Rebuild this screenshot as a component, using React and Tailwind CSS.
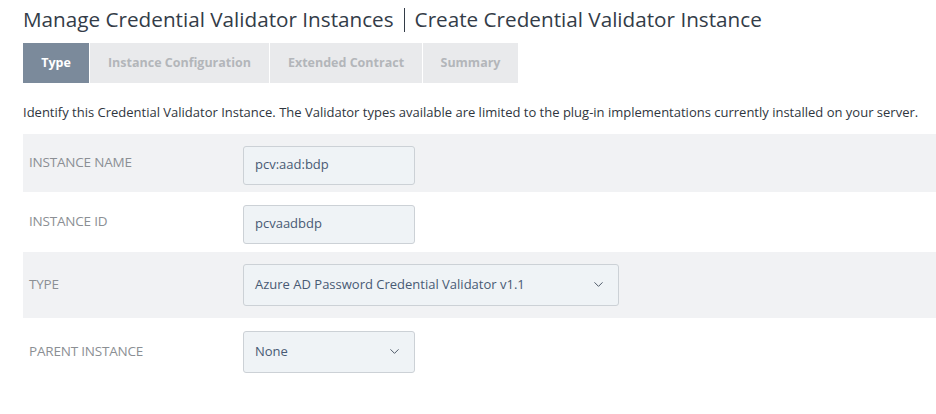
import { ChevronDown } from "lucide-react";

const tabs = [
  { name: "Type", w: "w-[66px]" },
  { name: "Instance Configuration", w: "w-[179px]" },
  { name: "Extended Contract", w: "w-[152px]" },
  { name: "Summary", w: "w-[95px]" },
];

const Field = ({ label, shaded, height, children }) => (
  <div className={`flex items-center ${height} ${shaded ? "bg-[#f1f2f4]" : "bg-white"}`}>
    <div className="w-[220px] pl-[6px] text-[13.5px] uppercase text-[#8b8f94] tracking-[-0.2px]">{label}</div>
    {children}
  </div>
);

const TextBox = ({ value }) => (
  <div className="w-[172px] h-[39px] mt-[5px] flex items-center px-[11px] rounded-[3px] border border-[#ccd1d6] bg-[#eff3f6] text-[13px] text-[#485a74]">
    {value}
  </div>
);

const SelectBox = ({ value, width }) => (
  <div className={`${width} h-[42px] flex items-center justify-between pl-[11px] pr-[12px] rounded-[3px] border border-[#ccd1d6] bg-[#eff3f6] text-[13px] text-[#485a74]`}>
    <span>{value}</span>
    <ChevronDown size={15} strokeWidth={1.6} className="text-[#4f5a69]" />
  </div>
);

export default function App() {
  return (
    <div className="w-[936px] h-[414px] bg-white pl-[23px] font-['Open_Sans',sans-serif] text-[#2f3640] overflow-hidden">
      {/* Header */}
      <div className="flex items-center h-[38px] pt-[2px] text-[20.7px] text-[#333c48]">
        <span>Manage Credential Validator Instances</span>
        <span className="mx-[10px] h-[24px] w-px bg-[#333c48]" />
        <span>Create Credential Validator Instance</span>
      </div>

      {/* Tabs */}
      <div className="flex mt-[5px] gap-px">
        {tabs.map((t, i) => (
          <div
            key={t.name}
            className={`${t.w} h-[40px] flex items-center justify-center text-[12.5px] font-bold whitespace-nowrap ${
              i === 0 ? "bg-[#7b8a9b] text-white" : "bg-[#e9eaec] text-[#b3b6ba]"
            }`}
          >
            {t.name}
          </div>
        ))}
      </div>

      <p className="mt-[20px] text-[13px] text-[#2f3640] whitespace-nowrap">
        Identify this Credential Validator Instance. The Validator types available are limited to the plug-in implementations currently installed on your server.
      </p>

      {/* Form */}
      <div className="mt-[11px]">
        <Field label="Instance Name" shaded height="h-[58px]">
          <TextBox value="pcv:aad:bdp" />
        </Field>
        <Field label="Instance ID" height="h-[60px]">
          <TextBox value="pcvaadbdp" />
        </Field>
        <Field label="Type" shaded height="h-[66px]">
          <SelectBox value="Azure AD Password Credential Validator v1.1" width="w-[376px]" />
        </Field>
        <Field label="Parent Instance" height="h-[68px]">
          <SelectBox value="None" width="w-[172px]" />
        </Field>
      </div>
    </div>
  );
}
